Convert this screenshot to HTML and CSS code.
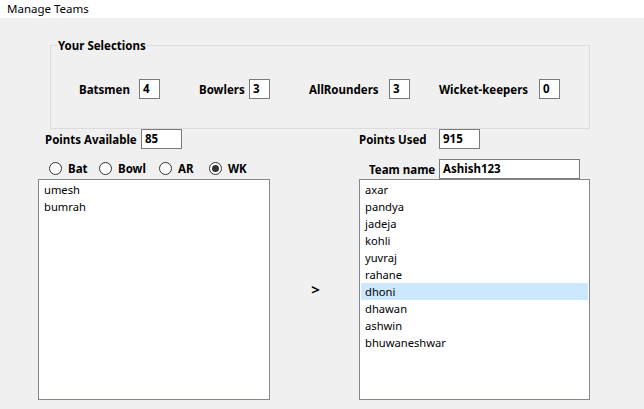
FILE: index.html
```html
<!DOCTYPE html>
<html>
<head>
<meta charset="utf-8">
<link rel="stylesheet" href="styles.css">
</head>
<body>
<div class="titlebar">Manage Teams</div>
<div class="main">
  <div class="groupbox">
    <span class="legend">Your Selections</span>
    <div class="sel-row">
      <div class="sel sel-bat"><span class="lbl">Batsmen</span><span class="num">4</span></div>
      <div class="sel sel-bowl"><span class="lbl">Bowlers</span><span class="num">3</span></div>
      <div class="sel sel-ar"><span class="lbl">AllRounders</span><span class="num">3</span></div>
      <div class="sel sel-wk"><span class="lbl">Wicket-keepers</span><span class="num">0</span></div>
    </div>
  </div>
  <div class="columns">
    <div class="col col-left">
      <div class="field-row pts-avail">
        <span class="lbl">Points Available</span><span class="input w41">85</span>
      </div>
      <div class="radio-row">
        <label class="radio"><span class="circle"></span><span class="lbl">Bat</span></label>
        <label class="radio"><span class="circle"></span><span class="lbl">Bowl</span></label>
        <label class="radio"><span class="circle"></span><span class="lbl">AR</span></label>
        <label class="radio"><span class="circle checked"></span><span class="lbl">WK</span></label>
      </div>
      <ul class="listbox">
        <li>umesh</li>
        <li>bumrah</li>
      </ul>
    </div>
    <div class="col col-mid">
      <span class="arrow">&gt;</span>
    </div>
    <div class="col col-right">
      <div class="field-row pts-used">
        <span class="lbl">Points Used</span><span class="input w41">915</span>
      </div>
      <div class="field-row team-row">
        <span class="lbl">Team name</span><span class="input w141">Ashish123</span>
      </div>
      <ul class="listbox">
        <li>axar</li>
        <li>pandya</li>
        <li>jadeja</li>
        <li>kohli</li>
        <li>yuvraj</li>
        <li>rahane</li>
        <li class="selected">dhoni</li>
        <li>dhawan</li>
        <li>ashwin</li>
        <li>bhuwaneshwar</li>
      </ul>
    </div>
  </div>
</div>
</body>
</html>
```

FILE: styles.css
```css
* { box-sizing: border-box; }
html, body {
  margin: 0;
  padding: 0;
  width: 644px;
  height: 409px;
  overflow: hidden;
  font-family: "Noto Sans", "Open Sans", sans-serif;
  font-size: 11.5px;
  color: #000;
  background: #f0f0f0;
}
.titlebar {
  height: 18px;
  background: #fff;
  padding-left: 7px;
  line-height: 18px;
  font-size: 11.5px;
}
.main {
  padding-top: 27px;
  height: 391px;
}
.groupbox {
  position: relative;
  margin-left: 50px;
  width: 540px;
  height: 84px;
  border: 1px solid #dcdcdc;
  padding-top: 33px;
}
.legend {
  position: absolute;
  left: 6px;
  top: -8px;
  padding: 0 1px;
  background: #f0f0f0;
  font-weight: bold;
  line-height: 16px;
}
.lbl { font-weight: bold; white-space: nowrap; }
.sel-row {
  display: flex;
  align-items: center;
  height: 20px;
  padding-left: 28px;
}
.sel { display: flex; align-items: center; }
.sel-bat .lbl { width: 60px; }
.sel-bowl { margin-left: 39px; }
.sel-bowl .lbl { width: 50px; }
.sel-ar { margin-left: 39px; }
.sel-ar .lbl { width: 80px; }
.sel-wk { margin-left: 29px; }
.sel-wk .lbl { width: 100px; }
.num, .input {
  display: inline-block;
  flex: none;
  height: 20px;
  width: 21px;
  border: 1px solid #7a7a7a;
  background: #fff;
  font-weight: bold;
  line-height: 18px;
  padding-left: 3px;
}
.w41 { width: 41px; }
.w141 { width: 141px; }
.columns {
  display: flex;
  padding-left: 38px;
}
.col { display: flex; flex-direction: column; }
.col-left { width: 232px; }
.col-mid {
  width: 89px;
  align-items: center;
  justify-content: flex-end;
  padding-bottom: 103px;
}
.col-right { width: 231px; }
.arrow {
  font-weight: bold;
  font-size: 15px;
  line-height: 16px;
  padding-left: 2px;
}
.field-row {
  display: flex;
  align-items: center;
  height: 20px;
}
.pts-avail { padding-left: 7px; }
.pts-avail .lbl { width: 96px; }
.pts-used .lbl { width: 80px; }
.team-row { margin-top: 10px; padding-left: 10px; }
.team-row .lbl { width: 70px; }
.radio-row {
  display: grid;
  grid-template-columns: 50px 60px 50px auto;
  align-items: center;
  height: 18px;
  margin-top: 10px;
  margin-bottom: 2px;
  padding-left: 11px;
}
.radio { display: flex; align-items: center; }
.circle {
  width: 13px;
  height: 13px;
  border-radius: 50%;
  border: 1px solid #333;
  background: #fff;
  margin-right: 6px;
  display: flex;
  align-items: center;
  justify-content: center;
}
.circle.checked::after {
  content: "";
  width: 7px;
  height: 7px;
  border-radius: 50%;
  background: #333;
}
.listbox {
  list-style: none;
  margin: 0;
  padding: 1px 1px;
  height: 221px;
  border: 1px solid #828790;
  background: #fff;
}
.listbox li {
  height: 17px;
  line-height: 17px;
  padding-left: 4px;
  font-size: 11.2px;
}
.listbox li.selected { background: #cce8ff; }
```
